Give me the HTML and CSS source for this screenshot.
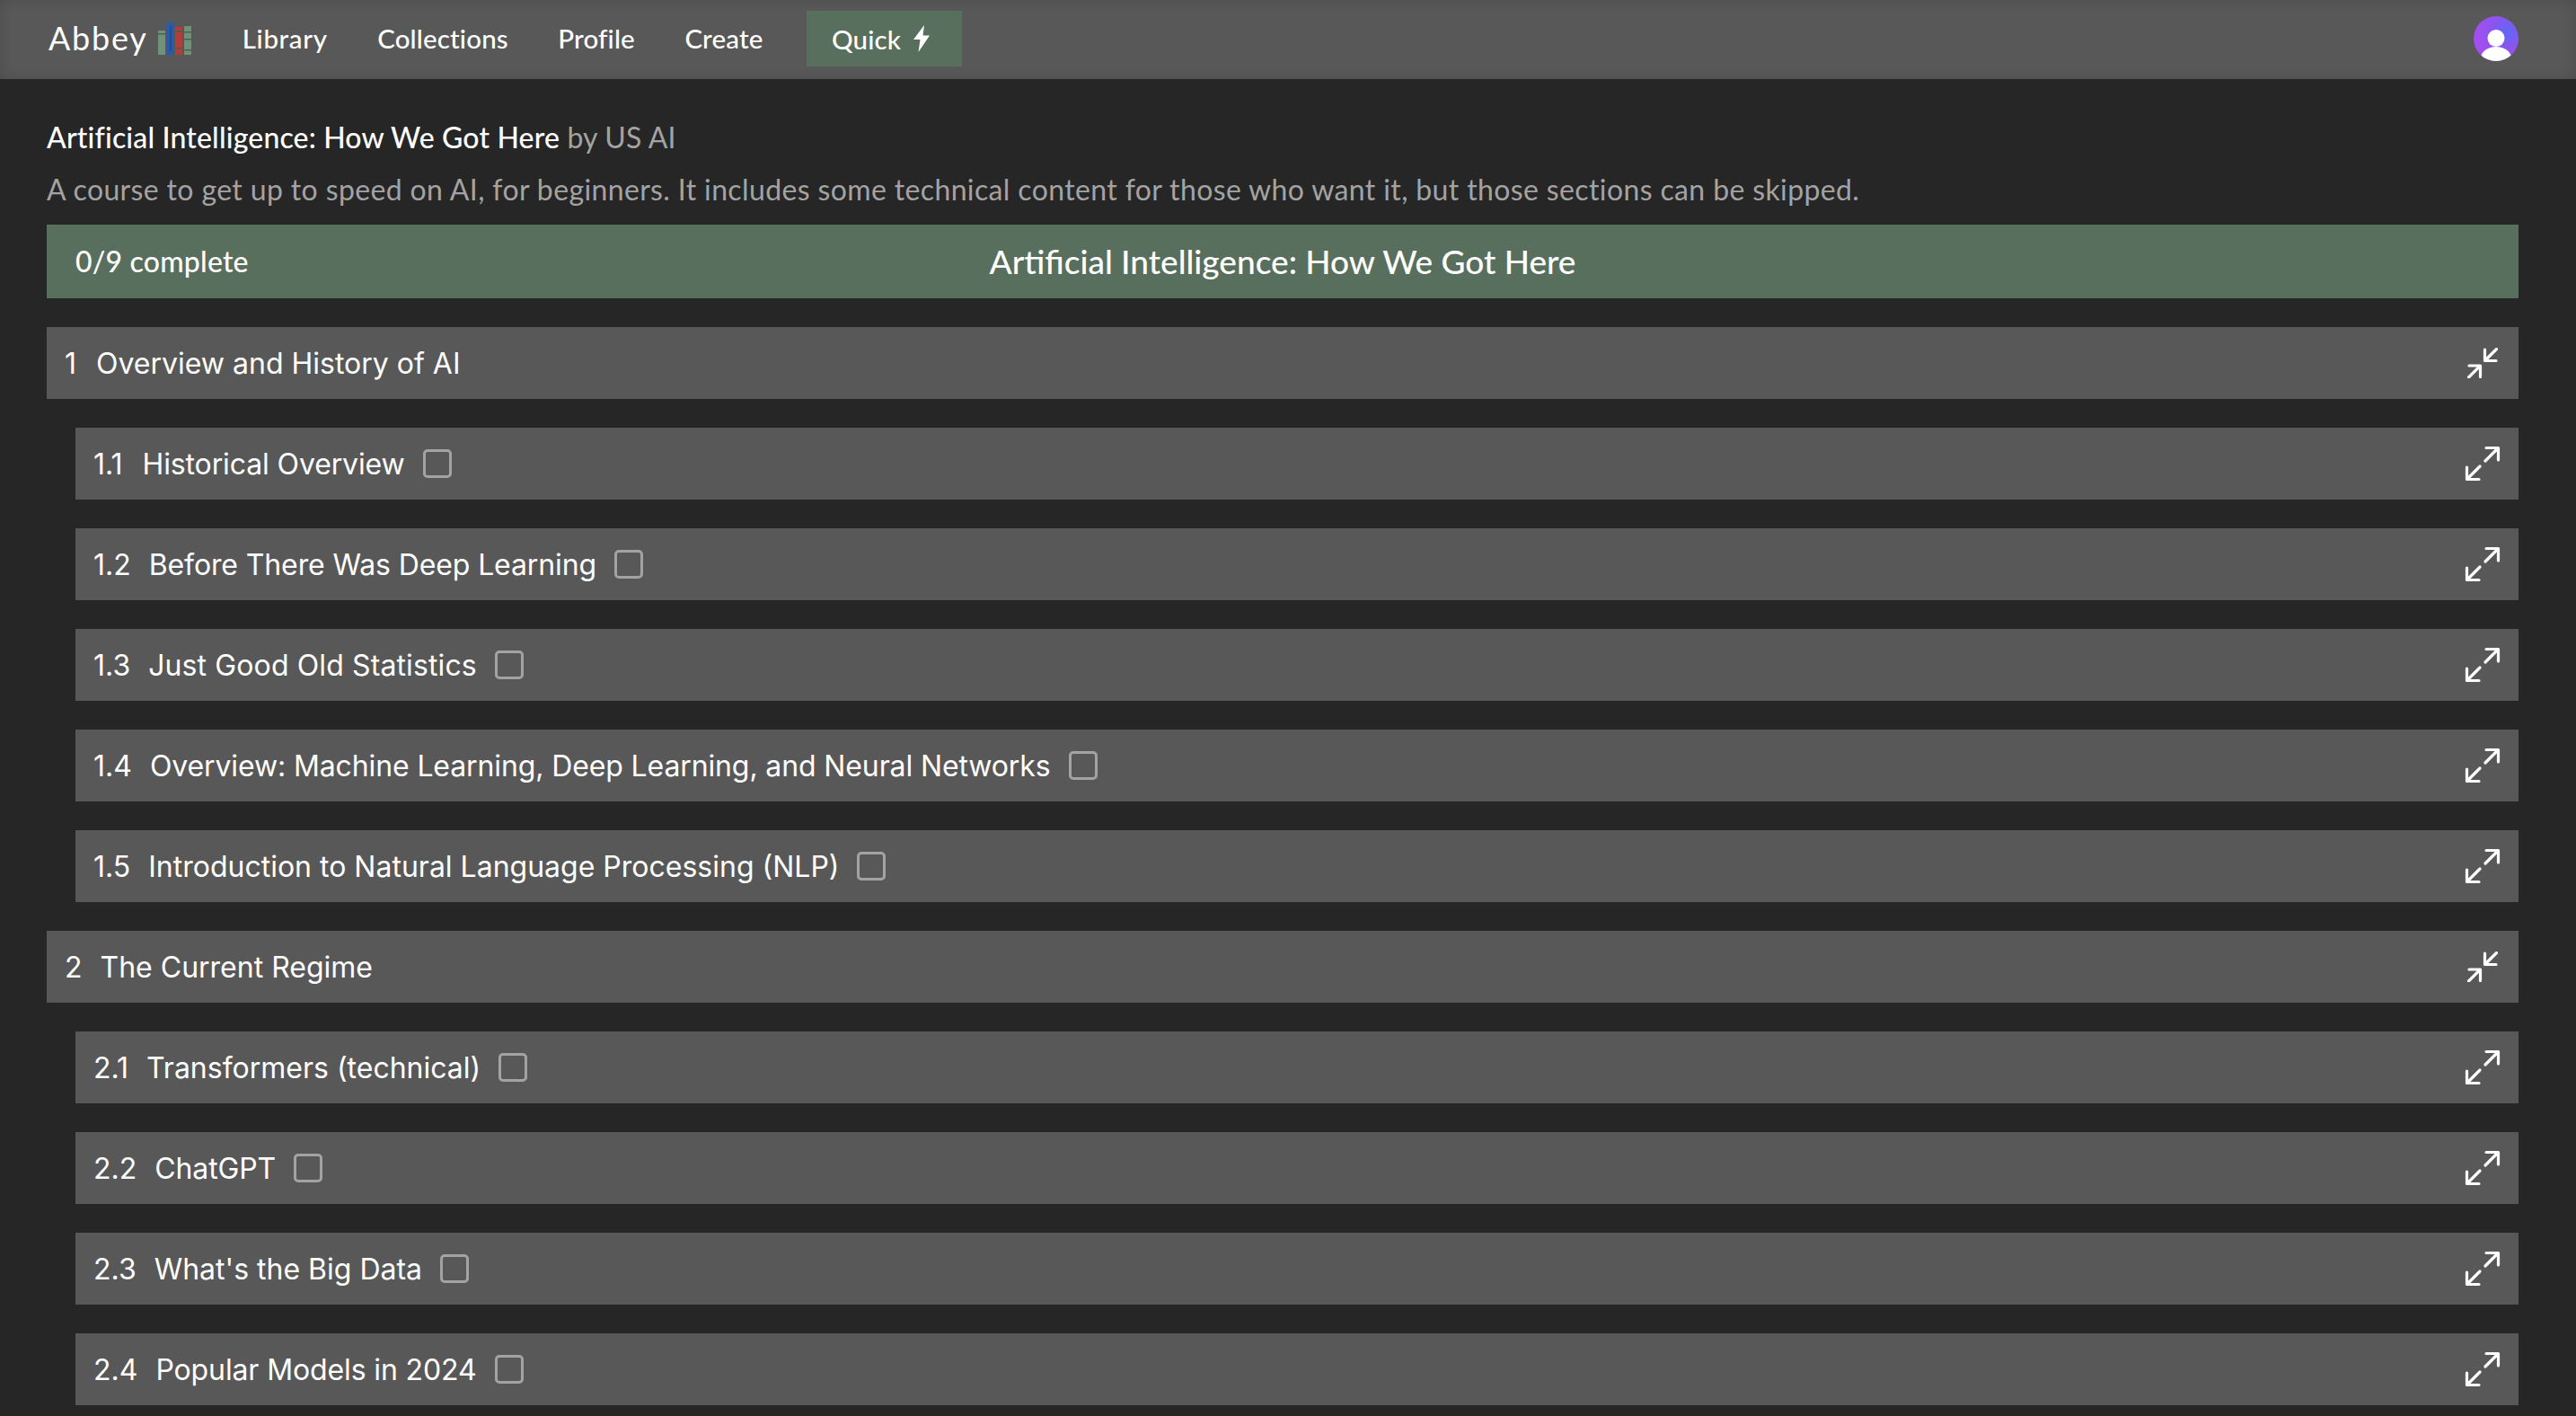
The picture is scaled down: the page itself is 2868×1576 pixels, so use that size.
FILE: index.html
```html
<!DOCTYPE html>
<html lang="en">
<head>
<meta charset="utf-8">
<title>Artificial Intelligence: How We Got Here</title>
<link rel="stylesheet" href="styles.css">
</head>
<body>
<svg class="sprite" width="0" height="0" aria-hidden="true">
  <symbol id="expand" viewBox="0 0 40 40"><path d="M24 2.500H37.500V16M37 3L23 17M2.500 24V37.500H16M3 37L17 23" fill="none" stroke="currentColor" stroke-width="3.200" stroke-linecap="round" stroke-linejoin="round"/></symbol>
  <symbol id="collapse" viewBox="0 0 34 34"><path d="M19.500 2V14.500H32M20 14L32.500 1.500M2 20H14.500V32.500M14 20.500L1.500 33" fill="none" stroke="currentColor" stroke-width="3.200" stroke-linecap="round" stroke-linejoin="round"/></symbol>
</svg>
<header class="nav">
  <div class="brand">
    <span class="brand-name">Abbey</span>
    <svg class="logo" viewBox="0 0 37 36" aria-hidden="true">
      <rect x="0" y="9" width="8" height="27" fill="#6f9278"/><rect x="0" y="12" width="8" height="1.500" fill="#4f5f52"/>
      <rect x="10" y="0" width="8" height="36" fill="#2a5bab"/><rect x="13.500" y="4" width="1" height="28" fill="#1d3f78"/>
      <rect x="19" y="5" width="8" height="31" fill="#b03f3c"/><rect x="19" y="9" width="8" height="1.500" fill="#555"/><rect x="19" y="28" width="8" height="1.500" fill="#555"/>
      <rect x="29" y="4" width="8" height="32" fill="#6f9278"/><rect x="29" y="10" width="8" height="1.500" fill="#4f5f52"/><rect x="29" y="18" width="8" height="1.500" fill="#4f5f52"/><rect x="29" y="30" width="8" height="1.500" fill="#4f5f52"/>
    </svg>
  </div>
  <nav class="links">
    <a class="link link-first">Library</a>
    <a class="link">Collections</a>
    <a class="link">Profile</a>
    <a class="link">Create</a>
    <a class="quick">Quick
      <svg class="bolt" viewBox="0 0 18 30" aria-hidden="true"><path d="M12 0L0 16H7.500L5.500 30L18 11.500H10.500Z" fill="currentColor"/></svg>
    </a>
  </nav>
  <svg class="avatar" viewBox="0 0 50 50" aria-hidden="true">
    <defs>
      <radialGradient id="av" cx="0.75" cy="0.35" r="0.7"><stop offset="0" stop-color="#5f68f5"/><stop offset="0.5" stop-color="#8b55ee"/><stop offset="1" stop-color="#a24ff0"/></radialGradient>
      <clipPath id="avc"><circle cx="25" cy="25" r="25"/></clipPath>
    </defs>
    <circle cx="25" cy="25" r="25" fill="url(#av)"/>
    <g clip-path="url(#avc)" fill="#fff"><circle cx="25" cy="24.500" r="9.500"/><ellipse cx="25" cy="47" rx="17" ry="13"/></g>
  </svg>
</header>
<main class="main">
  <p class="title"><span class="title-strong">Artificial Intelligence: How We Got Here</span> by US AI</p>
  <p class="desc">A course to get up to speed on AI, for beginners. It includes some technical content for those who want it, but those sections can be skipped.</p>
  <div class="banner"><span class="progress">0/9 complete</span><span class="banner-title">Artificial Intelligence: How We Got Here</span></div>
  <div class="list">
    <div class="row"><span class="num wide">1</span><span class="label natural">Overview and History of AI</span><svg class="ic-collapse"><use href="#collapse"/></svg></div>
    <div class="row sub"><span class="num wide">1.1</span><span class="label">Historical Overview</span><span class="check"></span><svg class="ic-expand"><use href="#expand"/></svg></div>
    <div class="row sub"><span class="num">1.2</span><span class="label">Before There Was Deep Learning</span><span class="check"></span><svg class="ic-expand"><use href="#expand"/></svg></div>
    <div class="row sub"><span class="num">1.3</span><span class="label loose">Just Good Old Statistics</span><span class="check"></span><svg class="ic-expand"><use href="#expand"/></svg></div>
    <div class="row sub"><span class="num">1.4</span><span class="label">Overview: Machine Learning, Deep Learning, and Neural Networks</span><span class="check"></span><svg class="ic-expand"><use href="#expand"/></svg></div>
    <div class="row sub"><span class="num">1.5</span><span class="label natural">Introduction to Natural Language Processing (NLP)</span><span class="check"></span><svg class="ic-expand"><use href="#expand"/></svg></div>
    <div class="row"><span class="num">2</span><span class="label natural">The Current Regime</span><svg class="ic-collapse"><use href="#collapse"/></svg></div>
    <div class="row sub"><span class="num">2.1</span><span class="label natural">Transformers (technical)</span><span class="check"></span><svg class="ic-expand"><use href="#expand"/></svg></div>
    <div class="row sub"><span class="num">2.2</span><span class="label">ChatGPT</span><span class="check"></span><svg class="ic-expand"><use href="#expand"/></svg></div>
    <div class="row sub"><span class="num">2.3</span><span class="label natural">What's the Big Data</span><span class="check"></span><svg class="ic-expand"><use href="#expand"/></svg></div>
    <div class="row sub"><span class="num">2.4</span><span class="label">Popular Models in 2024</span><span class="check"></span><svg class="ic-expand"><use href="#expand"/></svg></div>
  </div>
</main>
</body>
</html>
```
FILE: styles.css
```css
* { box-sizing: border-box; }
html, body { margin: 0; height: 100%; }
body {
  background: #262626;
  color: #fff;
  font-family: "Lato", "Liberation Sans", sans-serif;
  overflow: hidden;
}
.sprite { position: absolute; }
.nav {
  height: 88px;
  display: flex;
  align-items: center;
  padding: 0 64px 2px 54px;
  background: #585858;
  box-shadow: inset 0 0 14px rgba(0, 0, 0, 0.14);
}
.brand { display: flex; align-items: center; gap: 11px; }
.brand-name { font-size: 36px; letter-spacing: 1.8px; position: relative; top: -1px; }
.logo { width: 37px; height: 36px; }
.links { display: flex; align-items: center; margin-left: 57px; font-size: 29.5px; font-weight: 500; letter-spacing: 0.15px; }
.link { margin-right: 55.5px; position: relative; top: -1px; }
.link-first { letter-spacing: 0.65px; }
.quick {
  width: 173px;
  height: 62px;
  margin-left: -7px;
  padding-left: 28px;
  display: flex;
  align-items: center;
  gap: 14px;
  background: #586f5e;
}
.bolt { width: 18px; height: 30px; }
.avatar { width: 50px; height: 50px; margin-left: auto; }
.main { padding: 0 64px 0 52px; }
.title { margin: 0; padding-top: 45px; height: 100px; font-size: 32px; line-height: 40px; color: #a3a3a3; letter-spacing: 0.16px; }
.title-strong { color: #fff; font-weight: 500; }
.desc { margin: 0; padding-top: 3px; height: 62px; font-size: 32px; line-height: 40px; color: #a3a3a3; letter-spacing: 0.37px; white-space: nowrap; }
.banner {
  position: relative;
  height: 82px;
  display: flex;
  align-items: center;
  padding: 0 0 2px 32px;
  background: #586f5e;
  font-size: 32px;
  font-weight: 500;
}
.progress { letter-spacing: 0.2px; }
.banner-title { position: absolute; left: 0; right: 0; text-align: center; font-size: 37px; font-weight: 500; }
.list { margin-top: 32px; display: flex; flex-direction: column; gap: 32px; font-family: "Inter", sans-serif; font-size: 32px; }
.row { height: 80px; display: flex; align-items: center; padding: 0 20px; background: #585858; }
.sub { margin-left: 32px; }
.num { margin-right: 20px; }
.wide { margin-right: 22px; }
.label { letter-spacing: -0.12px; }
.natural { letter-spacing: 0; }
.loose { letter-spacing: 0.12px; }
.check { width: 32px; height: 32px; margin-left: 20px; border: 3px solid #a3a3a3; border-radius: 5px; }
.ic-expand { width: 40px; height: 40px; margin-left: auto; }
.ic-collapse { width: 34px; height: 34px; margin-left: auto; margin-right: 3px; }
```
